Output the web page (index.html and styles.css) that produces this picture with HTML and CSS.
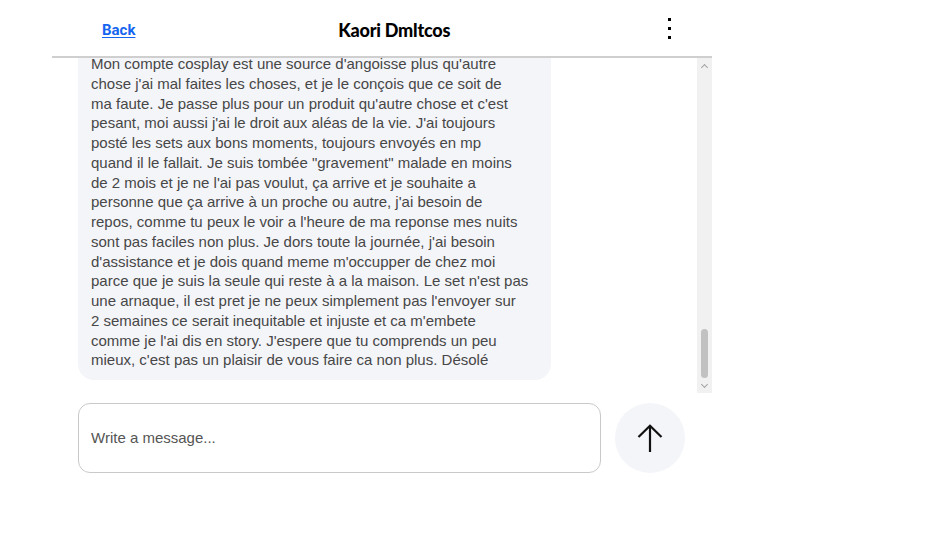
FILE: index.html
```html
<!DOCTYPE html>
<html lang="fr">
<head>
<meta charset="utf-8">
<title>Kaori Dmltcos</title>
<link rel="stylesheet" href="styles.css">
</head>
<body>
<div class="chat">
  <header class="chat-header">
    <a class="back" href="#">Back</a>
    <h1 class="title">Kaori Dmltcos</h1>
    <button class="menu" aria-label="Menu">
      <span class="dot"></span><span class="dot"></span><span class="dot"></span>
    </button>
  </header>
  <div class="thread">
    <div class="messages">
      <div class="bubble">
        <p>Mon compte cosplay est une source d'angoisse plus qu'autre<br>
chose j'ai mal faites les choses, et je le conçois que ce soit de<br>
ma faute. Je passe plus pour un produit qu'autre chose et c'est<br>
pesant, moi aussi j'ai le droit aux aléas de la vie. J'ai toujours<br>
posté les sets aux bons moments, toujours envoyés en mp<br>
quand il le fallait. Je suis tombée "gravement" malade en moins<br>
de 2 mois et je ne l'ai pas voulut, ça arrive et je souhaite a<br>
personne que ça arrive à un proche ou autre, j'ai besoin de<br>
repos, comme tu peux le voir a l'heure de ma reponse mes nuits<br>
sont pas faciles non plus. Je dors toute la journée, j'ai besoin<br>
d'assistance et je dois quand meme m'occupper de chez moi<br>
parce que je suis la seule qui reste à a la maison. Le set n'est pas<br>
une arnaque, il est pret je ne peux simplement pas l'envoyer sur<br>
2 semaines ce serait inequitable et injuste et ca m'embete<br>
comme je l'ai dis en story. J'espere que tu comprends un peu<br>
mieux, c'est pas un plaisir de vous faire ca non plus. Désolé</p>
      </div>
    </div>
    <div class="scrollbar">
      <span class="arrow up"></span>
      <span class="track"><span class="thumb"></span></span>
      <span class="arrow down"></span>
    </div>
  </div>
  <form class="composer">
    <input class="input" type="text" placeholder="Write a message...">
    <button class="send" type="button" aria-label="Send">
      <svg width="28" height="30" viewBox="0 0 28 30" fill="none" stroke="#111" stroke-width="2.2" stroke-linecap="butt" stroke-linejoin="miter">
        <path d="M14 29V3"/>
        <path d="M2.5 14L14 2.8L25.5 14"/>
      </svg>
    </button>
  </form>
</div>
</body>
</html>
```
FILE: styles.css
```css
* { box-sizing: border-box; }
html, body { margin: 0; padding: 0; background: #fff; }
body { font-family: "Liberation Sans", Arial, sans-serif; }

.chat {
  width: 660px;
  margin-left: 52px;
  display: flex;
  flex-direction: column;
}

.chat-header {
  height: 58px;
  border-bottom: 2px solid #cfcfcf;
  display: flex;
  align-items: center;
  padding: 0 27px 0 50px;
}

.back {
  color: #1565f0;
  font-weight: 700;
  font-size: 15px;
  text-decoration: underline;
  text-underline-offset: 2px;
  font-family: Roboto, Arial, sans-serif;
  padding-top: 3px;
}

.title {
  flex: 1;
  margin: 0;
  padding-top: 3px;
  text-align: center;
  font-family: Lato, "Noto Sans", sans-serif;
  font-weight: 900;
  font-size: 18px;
  letter-spacing: -0.2px;
  color: #000;
}

.menu {
  width: 32px;
  height: 32px;
  padding: 0;
  border: 0;
  background: none;
  display: flex;
  flex-direction: column;
  align-items: center;
  justify-content: center;
  gap: 6px;
}
.dot { width: 3px; height: 3px; background: #000; display: block; }

.thread {
  height: 335px;
  display: flex;
}

.messages {
  flex: 1;
  overflow: hidden;
  display: flex;
  flex-direction: column;
  justify-content: flex-end;
  padding: 0 0 13px 26px;
}

.bubble {
  width: 473px;
  background: #f4f5f9;
  border-radius: 16px;
  padding: 10px 13px 10px 13px;
  flex-shrink: 0;
}
.bubble p {
  margin: 0;
  font-size: 15px;
  line-height: 19.75px;
  color: #474747;
  white-space: nowrap;
}

.scrollbar {
  width: 15px;
  background: #f1f1f1;
  display: flex;
  flex-direction: column;
  align-items: center;
}
.arrow { height: 15px; width: 15px; display: flex; align-items: center; justify-content: center; }
.arrow::before {
  content: "";
  width: 4px; height: 4px;
  border-left: 1.5px solid #a3a3a3;
  border-top: 1.5px solid #a3a3a3;
}
.arrow.up::before { transform: rotate(45deg); margin-top: 3px; }
.arrow.down::before { transform: rotate(-135deg); margin-top: -3px; }
.track { flex: 1; width: 100%; display: flex; flex-direction: column; justify-content: flex-end; align-items: center; }
.thumb { width: 7px; height: 49px; border-radius: 4px; background: #c1c1c1; display: block; }

.composer {
  display: flex;
  align-items: center;
  gap: 14px;
  margin: 10px 0 0 26px;
}
.input {
  width: 523px;
  height: 70px;
  border: 1px solid #c9c9c9;
  border-radius: 12px;
  padding: 0 12px 2px;
  font-family: "Liberation Sans", Arial, sans-serif;
  font-size: 15px;
  color: #333;
  outline: none;
}
.input::placeholder { color: #555; }

.send {
  width: 70px;
  height: 70px;
  border-radius: 50%;
  border: 0;
  background: #f4f5f9;
  display: flex;
  align-items: center;
  justify-content: center;
  padding: 0;
}
```
